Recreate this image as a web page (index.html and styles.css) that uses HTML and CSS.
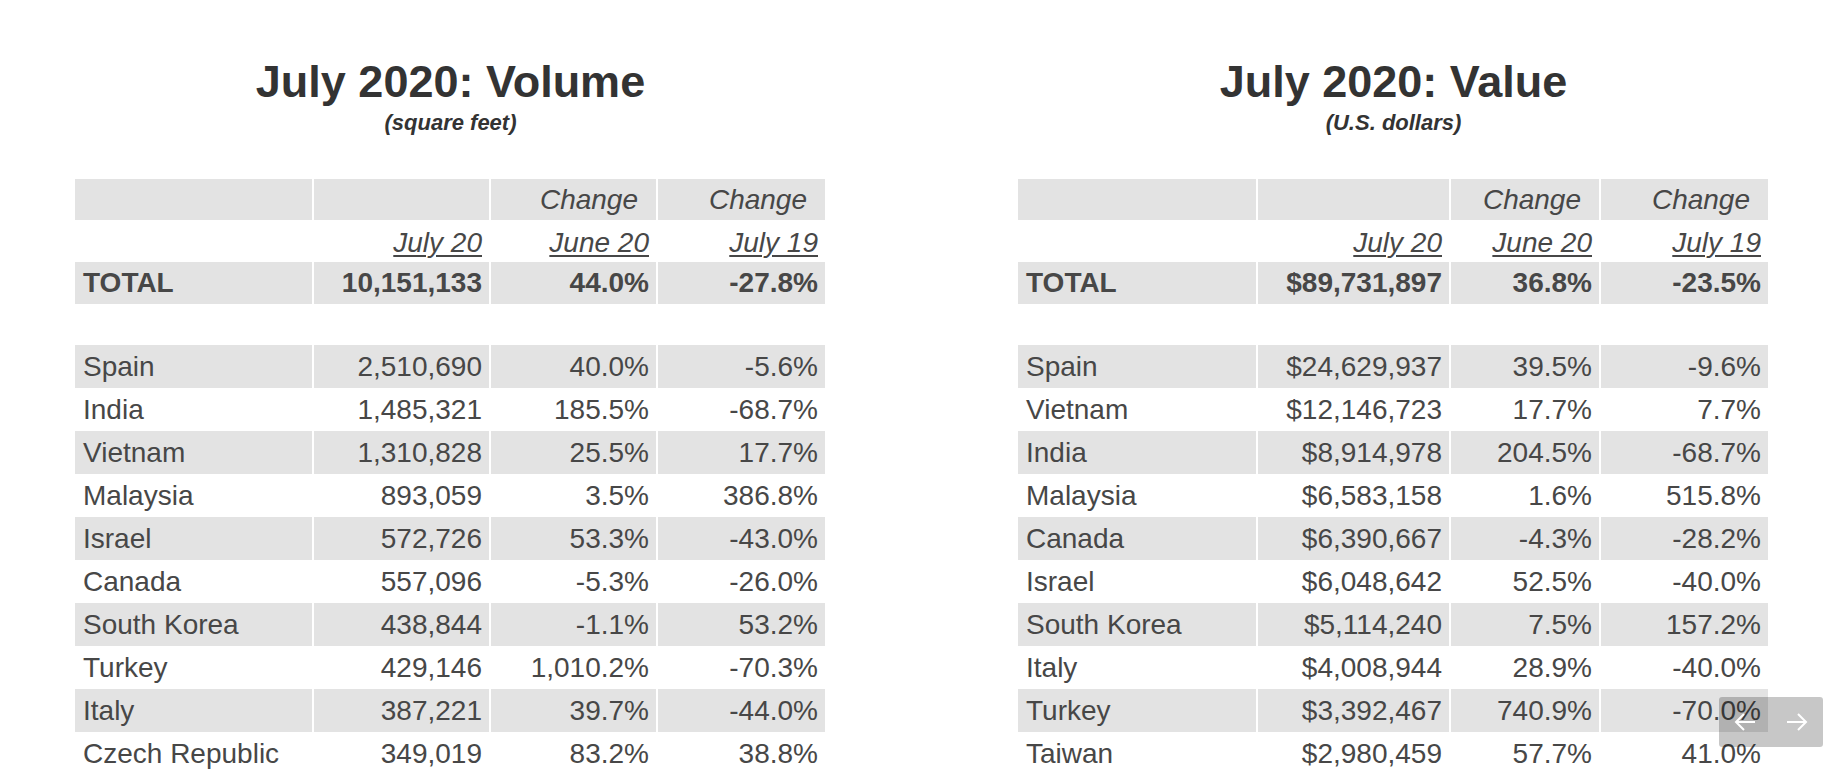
FILE: index.html
```html
<!DOCTYPE html>
<html lang="en">
<head>
<meta charset="utf-8">
<title>July 2020 Imports</title>
<link rel="stylesheet" href="styles.css">
</head>
<body>
<div class="page">
  <section class="panel">
    <h1 class="title">July 2020: Volume</h1>
    <p class="subtitle">(square feet)</p>
    <table class="data vol">
      <colgroup><col class="c1"><col class="c2"><col class="c3"><col class="c4"></colgroup>
      <tr class="r-h1 grey"><td></td><td></td><td class="chg">Change</td><td class="chg">Change</td></tr>
      <tr class="r-h2"><td></td><td class="num"><u>July 20</u></td><td class="num"><u>June 20</u></td><td class="num"><u>July 19</u></td></tr>
      <tr class="r-total grey"><td>TOTAL</td><td class="num">10,151,133</td><td class="num">44.0%</td><td class="num">-27.8%</td></tr>
      <tr class="r-blank"><td></td><td></td><td></td><td></td></tr>
      <tr class="grey"><td>Spain</td><td class="num">2,510,690</td><td class="num">40.0%</td><td class="num">-5.6%</td></tr>
      <tr><td>India</td><td class="num">1,485,321</td><td class="num">185.5%</td><td class="num">-68.7%</td></tr>
      <tr class="grey"><td>Vietnam</td><td class="num">1,310,828</td><td class="num">25.5%</td><td class="num">17.7%</td></tr>
      <tr><td>Malaysia</td><td class="num">893,059</td><td class="num">3.5%</td><td class="num">386.8%</td></tr>
      <tr class="grey"><td>Israel</td><td class="num">572,726</td><td class="num">53.3%</td><td class="num">-43.0%</td></tr>
      <tr><td>Canada</td><td class="num">557,096</td><td class="num">-5.3%</td><td class="num">-26.0%</td></tr>
      <tr class="grey"><td>South Korea</td><td class="num">438,844</td><td class="num">-1.1%</td><td class="num">53.2%</td></tr>
      <tr><td>Turkey</td><td class="num">429,146</td><td class="num">1,010.2%</td><td class="num">-70.3%</td></tr>
      <tr class="grey"><td>Italy</td><td class="num">387,221</td><td class="num">39.7%</td><td class="num">-44.0%</td></tr>
      <tr><td>Czech Republic</td><td class="num">349,019</td><td class="num">83.2%</td><td class="num">38.8%</td></tr>
    </table>
  </section>
  <section class="panel">
    <h1 class="title">July 2020: Value</h1>
    <p class="subtitle">(U.S. dollars)</p>
    <table class="data val">
      <colgroup><col class="c1"><col class="c2"><col class="c3"><col class="c4"></colgroup>
      <tr class="r-h1 grey"><td></td><td></td><td class="chg">Change</td><td class="chg">Change</td></tr>
      <tr class="r-h2"><td></td><td class="num"><u>July 20</u></td><td class="num"><u>June 20</u></td><td class="num"><u>July 19</u></td></tr>
      <tr class="r-total grey"><td>TOTAL</td><td class="num">$89,731,897</td><td class="num">36.8%</td><td class="num">-23.5%</td></tr>
      <tr class="r-blank"><td></td><td></td><td></td><td></td></tr>
      <tr class="grey"><td>Spain</td><td class="num">$24,629,937</td><td class="num">39.5%</td><td class="num">-9.6%</td></tr>
      <tr><td>Vietnam</td><td class="num">$12,146,723</td><td class="num">17.7%</td><td class="num">7.7%</td></tr>
      <tr class="grey"><td>India</td><td class="num">$8,914,978</td><td class="num">204.5%</td><td class="num">-68.7%</td></tr>
      <tr><td>Malaysia</td><td class="num">$6,583,158</td><td class="num">1.6%</td><td class="num">515.8%</td></tr>
      <tr class="grey"><td>Canada</td><td class="num">$6,390,667</td><td class="num">-4.3%</td><td class="num">-28.2%</td></tr>
      <tr><td>Israel</td><td class="num">$6,048,642</td><td class="num">52.5%</td><td class="num">-40.0%</td></tr>
      <tr class="grey"><td>South Korea</td><td class="num">$5,114,240</td><td class="num">7.5%</td><td class="num">157.2%</td></tr>
      <tr><td>Italy</td><td class="num">$4,008,944</td><td class="num">28.9%</td><td class="num">-40.0%</td></tr>
      <tr class="grey"><td>Turkey</td><td class="num">$3,392,467</td><td class="num">740.9%</td><td class="num">-70.0%</td></tr>
      <tr><td>Taiwan</td><td class="num">$2,980,459</td><td class="num">57.7%</td><td class="num">41.0%</td></tr>
    </table>
  </section>
</div>
<div class="nav">
  <svg class="arrow" width="24" height="22" viewBox="0 0 24 22"><path d="M22 11H3M11 3L3 11l8 8" fill="none" stroke="#fff" stroke-width="2"/></svg>
  <svg class="arrow" width="24" height="22" viewBox="0 0 24 22"><path d="M2 11h19M13 3l8 8-8 8" fill="none" stroke="#fff" stroke-width="2"/></svg>
</div>
</body>
</html>
```
FILE: styles.css
```css
html, body {
  margin: 0;
  padding: 0;
  background: #fff;
  overflow: hidden;
}
body {
  font-family: "Liberation Sans", Arial, sans-serif;
  color: #474747;
  position: relative;
  height: 774px;
}
.page {
  display: flex;
  gap: 192px;
  padding: 59px 0 0 75px;
}
.panel {
  width: 751px;
}
.title {
  margin: 0;
  font-size: 45px;
  line-height: 1;
  font-weight: 700;
  color: #333;
  text-align: center;
}
.subtitle {
  margin: 8px 0 0;
  font-size: 22px;
  line-height: 1;
  font-weight: 700;
  font-style: italic;
  color: #333;
  text-align: center;
}
.data {
  margin-top: 45px;
  border-collapse: separate;
  border-spacing: 0;
  table-layout: fixed;
  width: 750px;
  font-size: 28px;
}
.vol .c1 { width: 237px; }
.vol .c2 { width: 177px; }
.vol .c3 { width: 167px; }
.vol .c4 { width: 169px; }
.val .c1 { width: 238px; }
.val .c2 { width: 193px; }
.val .c3 { width: 150px; }
.val .c4 { width: 169px; }
.data td {
  height: 43px;
  padding: 0 7px 0 8px;
  white-space: nowrap;
  line-height: 1;
  box-sizing: border-box;
}
.data td + td {
  border-left: 2px solid #fff;
}
.data .r-h1 td { height: 41px; }
.data .r-h2 td { height: 42px; padding-top: 3px; }
.data .r-total td { height: 42px; font-weight: 700; }
.data .r-blank td { height: 41px; }
.grey td {
  background: #e3e3e3;
}
.num {
  text-align: right;
}
.chg {
  text-align: right;
  font-style: italic;
  padding-right: 18px !important;
}
.r-h2 u {
  font-style: italic;
  text-decoration-thickness: 2px;
  text-underline-offset: 3px;
}
.nav {
  position: absolute;
  left: 1719px;
  top: 697px;
  width: 104px;
  height: 50px;
  border-radius: 3px;
  background: rgba(0, 0, 0, 0.22);
  display: flex;
  align-items: center;
  justify-content: space-around;
}
.arrow {
  display: block;
}
```
